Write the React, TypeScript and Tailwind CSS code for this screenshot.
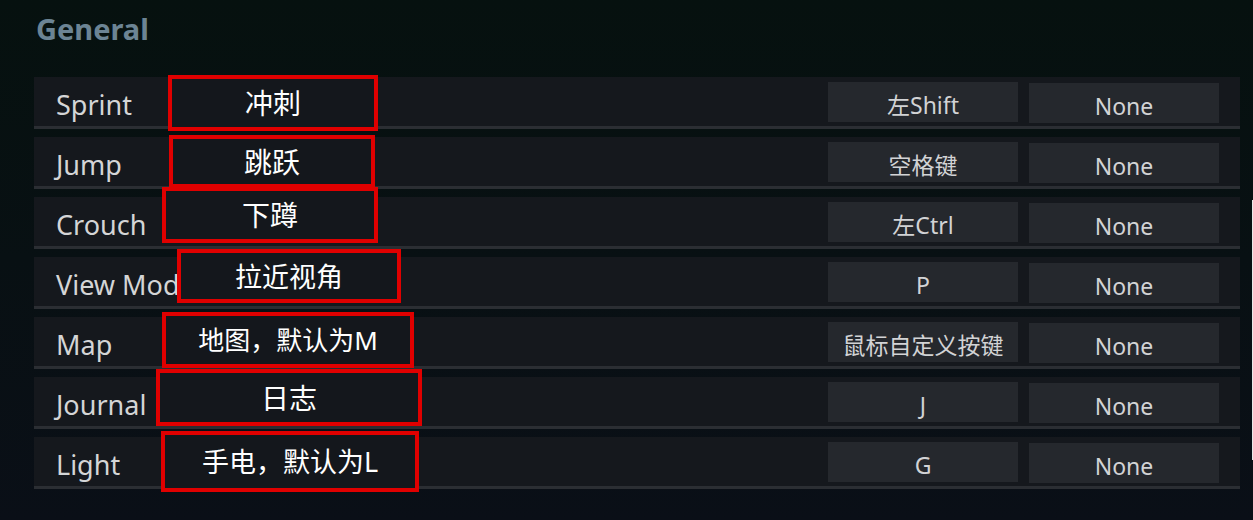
const binds = [
  { label: "Sprint", key: "左Shift", note: "冲刺", nx: "left-[134px]", ny: "-top-[2px]", nw: "w-[210px]", nh: "h-[56px]", size: "text-[28px]" },
  { label: "Jump", key: "空格键", note: "跳跃", nx: "left-[135px]", ny: "-top-[2px]", nw: "w-[206px]", nh: "h-[53px]", size: "text-[28px]" },
  { label: "Crouch", key: "左Ctrl", note: "下蹲", nx: "left-[128px]", ny: "-top-[10px]", nw: "w-[216px]", nh: "h-[56px]", size: "text-[28px]" },
  { label: "View Mode", key: "P", note: "拉近视角", nx: "left-[143px]", ny: "-top-[8px]", nw: "w-[224px]", nh: "h-[54px]", size: "text-[27px]" },
  { label: "Map", key: "鼠标自定义按键", note: "地图，默认为M", nx: "left-[128px]", ny: "-top-[5px]", nw: "w-[252px]", nh: "h-[56px]", size: "text-[26px]" },
  { label: "Journal", key: "J", note: "日志", nx: "left-[122px]", ny: "-top-[8px]", nw: "w-[266px]", nh: "h-[57px]", size: "text-[28px]" },
  { label: "Light", key: "G", note: "手电，默认为L", nx: "left-[127px]", ny: "-top-[6px]", nw: "w-[258px]", nh: "h-[61px]", size: "text-[27px]" },
];

const sans = "font-['Noto_Sans','Noto_Sans_CJK_SC',sans-serif]";

function KeyBox({ text }: { text: string }) {
  return (
    <div className="w-[190px] h-[40px] bg-[#25282d] flex items-center justify-center pt-[7px] text-[23px] text-[#d2d3d5] leading-none">
      {text}
    </div>
  );
}

export default function App() {
  return (
    <div className={`w-[1253px] h-[520px] overflow-hidden flex bg-gradient-to-b from-[#06110f] via-[#081013] to-[#0a0f17] ${sans}`}>
      <div className="flex-1 pl-[34px] pr-[12px]">
        <h2 className="text-[29px] font-bold text-[#6c8494] leading-none pt-[14px] pl-[2px] h-[77px]">General</h2>
        <div className="flex flex-col gap-[8px]">
          {binds.map((b) => (
            <div key={b.label} className="relative">
              <div className="h-[49px] bg-[#15181d] flex items-center pl-[22px] pr-[21px]">
                <span className="text-[27px] text-[#d4d5d6] leading-none pt-[5px] flex-1">{b.label}</span>
                <div className="flex gap-[11px] pt-[9px] self-start mt-[-4px]">
                  <div>
                    <KeyBox text={b.key} />
                  </div>
                  <div className="pt-[1px]">
                    <KeyBox text="None" />
                  </div>
                </div>
              </div>
              <div className="h-[3px] bg-[#2b2e33]" />
              <div
                className={`absolute ${b.nx} ${b.ny} ${b.nw} ${b.nh} border-[4px] border-[#e00000] bg-[#14171c] flex items-center justify-center text-white ${b.size} leading-none`}
              >
                {b.note}
              </div>
            </div>
          ))}
        </div>
      </div>
      <div className="w-[1px] flex flex-col">
        <div className="h-[200px]" />
        <div className="h-[260px] bg-[#e8e8e8]" />
      </div>
    </div>
  );
}
